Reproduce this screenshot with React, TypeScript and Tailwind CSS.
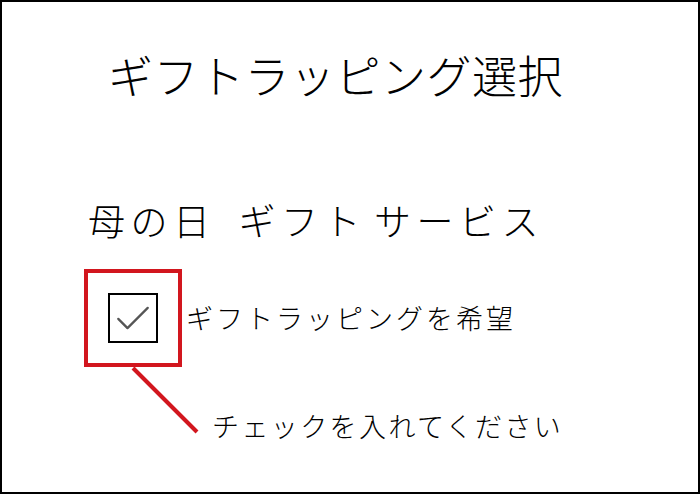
import { useState } from 'react';

const jp = "font-['Noto_Sans_CJK_JP','Noto_Sans',sans-serif]";

export default function App() {
  const [wrap, setWrap] = useState(true);

  return (
    <div className={`relative h-[494px] w-[700px] overflow-hidden border-2 border-black bg-white text-black ${jp}`}>
      {/* Page heading */}
      <h1 className="pl-[106px] pt-[48px] text-[45px] font-light leading-[1.1] tracking-[0.5px]">ギフトラッピング選択</h1>

      {/* Service section */}
      <section className="pl-[86px] pt-[98px]">
        <h2 className="flex text-[37px] font-light leading-[1.2] tracking-[5.5px]">
          <span>母の日</span>
          <span className="ml-[23px]">ギフト</span>
          <span className="ml-[8px]">サービス</span>
        </h2>

        <label className="mt-[27px] flex cursor-pointer items-center">
          <span className="-ml-[4px] flex h-[98px] w-[98px] items-center justify-center border-4 border-[#d2161e]">
            <input
              type="checkbox"
              checked={wrap}
              onChange={(e) => setWrap(e.target.checked)}
              className="sr-only"
            />
            <span className="flex h-[50px] w-[50px] items-center justify-center border-2 border-black">
              {wrap && (
                <svg viewBox="0 0 50 50" className="h-[50px] w-[50px]" aria-hidden="true">
                  <path d="M9 26 L19 36 L41 14" fill="none" stroke="#555" strokeWidth={2.5} strokeLinecap="round" strokeLinejoin="round" />
                </svg>
              )}
            </span>
          </span>
          <span className="ml-[4px] text-[27px] font-light tracking-[3px]">ギフトラッピングを希望</span>
        </label>

        <p className="mt-[39px] pl-[124px] text-[27px] font-light tracking-[2.4px]">チェックを入れてください</p>
      </section>

      {/* Callout line from the frame to the hint */}
      <svg className="pointer-events-none absolute left-0 top-0" width="700" height="494" aria-hidden="true">
        <line x1="131" y1="366" x2="195" y2="430" stroke="#d2161e" strokeWidth={4} />
      </svg>
    </div>
  );
}
